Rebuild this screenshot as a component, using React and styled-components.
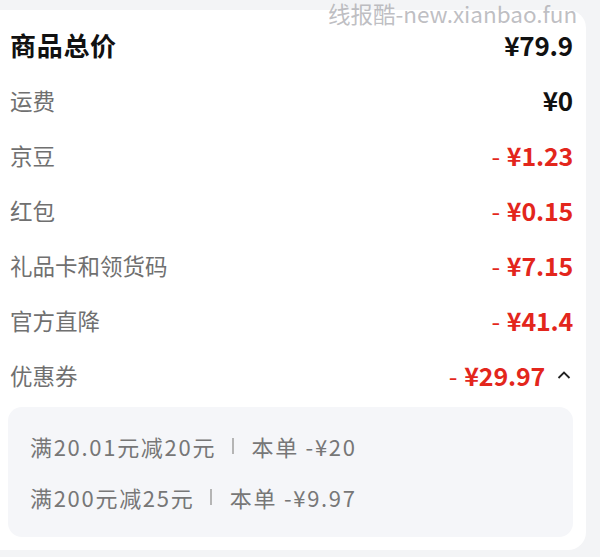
import React from 'react';
import styled, { createGlobalStyle } from 'styled-components';

const GlobalStyle = createGlobalStyle`
  html, body {
    margin: 0;
    padding: 0;
    background: #f3f4f6;
    font-family: "Noto Sans CJK SC", "Noto Sans", sans-serif;
  }
`;

const Page = styled.div`
  position: relative;
  width: 600px;
  height: 557px;
  padding-top: 10px;
  box-sizing: border-box;
`;

const Watermark = styled.div`
  position: absolute;
  top: 1px;
  left: 328px;
  font-size: 22.5px;
  line-height: 24px;
  color: rgba(170, 170, 175, 0.75);
  z-index: 2;
`;

const Card = styled.div`
  width: 586px;
  height: 540px;
  box-sizing: border-box;
  background: #fff;
  border-radius: 0 18px 18px 0;
  padding: 7px 13px 13px 8px;
  display: flex;
  flex-direction: column;
`;

const Row = styled.div`
  height: 55px;
  display: flex;
  align-items: center;
  justify-content: space-between;
  padding-left: 2px;
`;

const Label = styled.span`
  font-size: ${(p) => (p.$main ? '26px' : '22.5px')};
  letter-spacing: ${(p) => (p.$main ? '0.7px' : '0')};
  font-weight: ${(p) => (p.$main ? 700 : 400)};
  color: ${(p) => (p.$main ? '#111' : '#707070')};
`;

const Value = styled.span`
  display: flex;
  align-items: center;
  font-size: ${(p) => (p.$red ? '25px' : '26px')};
  font-weight: 700;
  color: ${(p) => (p.$red ? '#e3261c' : '#111')};
  letter-spacing: -0.2px;
`;

const Minus = styled.span`
  font-weight: 400;
  margin-right: 7px;
`;

const Caret = styled.svg`
  margin-left: 12px;
  margin-right: 2px;
`;

const Detail = styled.div`
  margin-top: 5px;
  height: 130px;
  box-sizing: border-box;
  background: #f5f6f9;
  border-radius: 14px;
  padding: 13px 20px 14px 22px;
  display: flex;
  flex-direction: column;
`;

const DetailLine = styled.div`
  height: 51px;
  display: flex;
  align-items: center;
  font-size: 22px;
  letter-spacing: 1.7px;
  color: #777;
`;

const Sep = styled.span`
  display: inline-block;
  width: 1.5px;
  height: 16px;
  background: #b5b5b5;
  margin: 0 18px 0 16px;
`;

const rows = [
  { label: '运费', value: '¥0' },
  { label: '京豆', value: '¥1.23', red: true },
  { label: '红包', value: '¥0.15', red: true },
  { label: '礼品卡和领货码', value: '¥7.15', red: true },
  { label: '官方直降', value: '¥41.4', red: true },
];

const coupons = [
  { rule: '满20.01元减20元', saved: '本单 -¥20' },
  { rule: '满200元减25元', saved: '本单 -¥9.97' },
];

export default function App() {
  return (
    <Page>
      <GlobalStyle />
      <Watermark>线报酷-new.xianbao.fun</Watermark>
      <Card>
        <Row>
          <Label $main>商品总价</Label>
          <Value>¥79.9</Value>
        </Row>
        {rows.map((row) => (
          <Row key={row.label}>
            <Label>{row.label}</Label>
            <Value $red={row.red}>
              {row.red && <Minus>-</Minus>}
              {row.value}
            </Value>
          </Row>
        ))}
        <Row>
          <Label>优惠券</Label>
          <Value $red>
            <Minus>-</Minus>¥29.97
            <Caret width="14" height="10" viewBox="0 0 14 10">
              <path d="M1.5 8 L7 2.5 L12.5 8" fill="none" stroke="#222" strokeWidth="1.8" />
            </Caret>
          </Value>
        </Row>
        <Detail>
          {coupons.map((c) => (
            <DetailLine key={c.rule}>
              {c.rule}
              <Sep />
              {c.saved}
            </DetailLine>
          ))}
        </Detail>
      </Card>
    </Page>
  );
}
